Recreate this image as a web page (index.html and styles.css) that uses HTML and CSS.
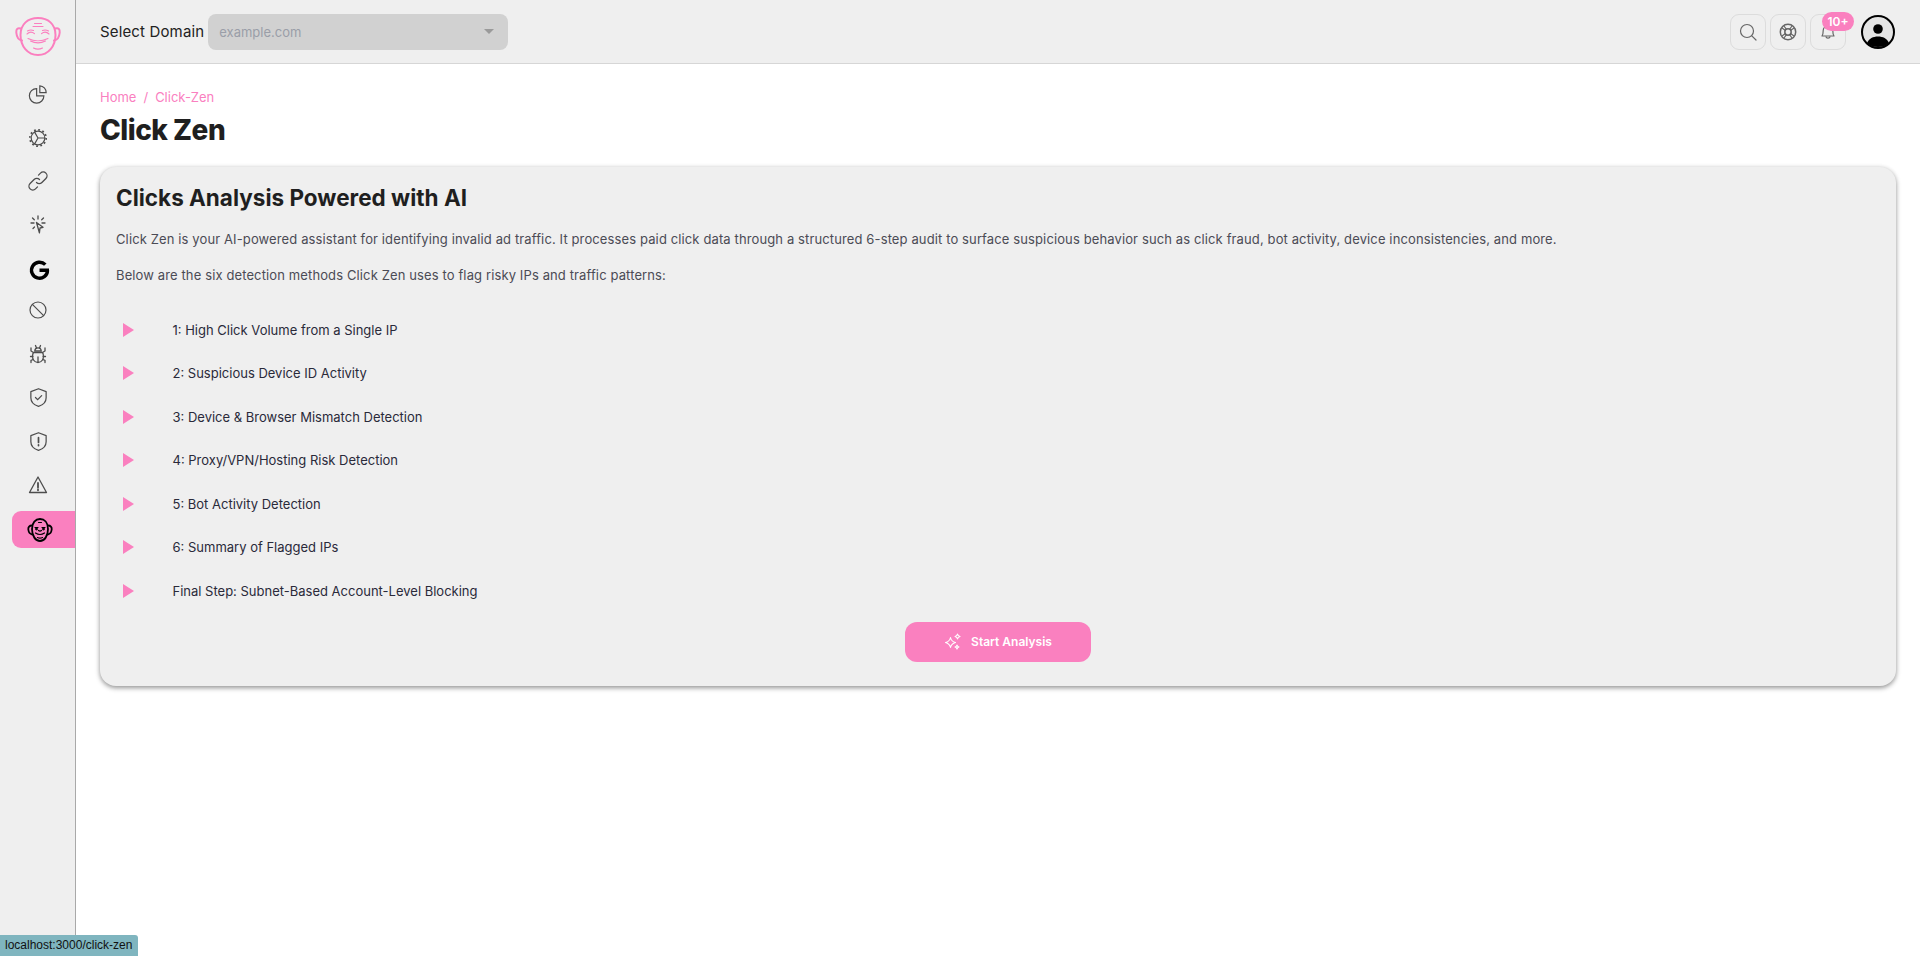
FILE: index.html
```html
<!DOCTYPE html>
<html lang="en">
<head>
  <meta charset="UTF-8" />
  <meta name="viewport" content="width=device-width, initial-scale=1.0"/>
  <title>Click Zen</title>
  <link rel="stylesheet" href="styles.css">
</head>
<body>
  <div class="app">
    <!-- Sidebar -->
    <aside class="sidebar">
      <div class="logo">
        <svg width="46" height="40" viewBox="0 0 46 40" fill="none" stroke="#fb7fbf" stroke-width="1.100" stroke-linecap="round">
          <path stroke-width="2" d="M5.500 19C5.500 8 13 2 23 2s17.500 6 17.500 17c0 11-7 20-17.500 20S5.500 30 5.500 19z"/>
          <path stroke-width="2" d="M5.500 12.500C3 11.500 1 13 1.300 16.500c.3 3.500 2 7.500 5.700 8M40.500 12.500c2.500-1 4.500.5 4.200 4-.3 3.500-2 7.500-5.700 8"/>
          <path d="M12 18c2.500-2.500 5-2.500 7.500-.3M26.500 17.700c2.500-2.200 5-2.200 7.500.3M12.500 15c2-1.200 4-1.300 6-.5M27.500 14.500c2-.8 4-.7 6 .5M13 22.500c6 3 14 3 20 0M15.500 25c5 2.500 10 2.500 15 0M18.500 32c3 1.500 6 1.500 9 0M19.500 7.500h7M18 10.500h10"/>
        </svg>
      </div>
      <nav class="nav">
        <a class="nav-item">
          <svg width="20" height="20" viewBox="0 0 22 22" class="ico"><path d="M9.500 5a8 8 0 1 0 8 8H9.500z"/><path d="M13 2a7.500 7.500 0 0 1 7 7.500h-7z"/></svg>
        </a>
        <a class="nav-item">
          <svg width="20" height="20" viewBox="0 0 22 22" class="ico"><circle cx="11" cy="11" r="7.500"/><circle cx="11" cy="11" r="9" stroke-width="1.800" stroke-dasharray="2 2.710" stroke-linecap="butt"/><path d="M11 11h7.500M11 11l-3.700 6.500M11 11L7.300 4.500"/></svg>
        </a>
        <a class="nav-item">
          <svg width="22" height="22" viewBox="0 0 22 22" class="ico"><path d="M9.500 12.500a3.800 3.800 0 0 0 5.400 0l4-4a3.800 3.800 0 0 0-5.400-5.400l-2 2"/><path d="M12.500 9.500a3.800 3.800 0 0 0-5.400 0l-4 4a3.800 3.800 0 0 0 5.400 5.400l2-2"/></svg>
        </a>
        <a class="nav-item">
          <svg width="22" height="22" viewBox="0 0 22 22" class="ico"><path d="M9.500 8.500l6.500 4.800-3 .7-.6 4.800z" stroke-linejoin="round"/><path d="M11 2v3M4 9h3M18 9h-3M5.500 4l1.800 1.800M16.500 4l-1.800 1.800M6 14.500l1.500-1.500"/></svg>
        </a>
        <a class="nav-item google">
          <svg width="22" height="22" viewBox="0 0 22 22" fill="none" stroke="#000" stroke-width="3.400"><path d="M21 11.200H11.500M19.500 11.200A8 8 0 1 1 17.300 5.700"/></svg>
        </a>
        <a class="nav-item">
          <svg width="20" height="20" viewBox="0 0 22 22" class="ico"><circle cx="11" cy="11" r="8.800"/><path d="M4.800 4.800l12.400 12.400"/></svg>
        </a>
        <a class="nav-item">
          <svg width="22" height="22" viewBox="0 0 22 22" class="ico"><path d="M7.800 8a3.200 3.200 0 0 1 6.400 0z"/><path d="M6.500 9.500h9c1.200 1.500 1.200 6 0 7.500-1 1.500-2.700 2.500-4.500 2.500S7.500 18.500 6.500 17c-1.200-1.500-1.200-6 0-7.500zM11 14v5M8.500 2.500l1 2.500M13.500 2.500l-1 2.500M4 5v3l2.500 1.500M18 5v3l-2.500 1.500M3.500 13.500h2.500M18.500 13.500H16M4 19.500v-2l2-1M18 19.500v-2l-2-1"/></svg>
        </a>
        <a class="nav-item">
          <svg width="21" height="21" viewBox="0 0 22 22" class="ico"><path d="M11 1.800l8 3v6.400c0 4.700-3.200 7.600-8 9-4.800-1.400-8-4.300-8-9V4.800z" stroke-linejoin="round"/><path d="M7.800 11l2.300 2.300L14.300 9"/></svg>
        </a>
        <a class="nav-item">
          <svg width="21" height="21" viewBox="0 0 22 22" class="ico"><path d="M11 1.800l8 3v6.400c0 4.700-3.200 7.600-8 9-4.800-1.400-8-4.300-8-9V4.800z" stroke-linejoin="round"/><path stroke-width="1.800" d="M11 7v5M11 14.500v.8"/></svg>
        </a>
        <a class="nav-item">
          <svg width="22" height="22" viewBox="0 0 22 22" class="ico"><path d="M11 3L2.500 18.500h17z" stroke-linejoin="round"/><path stroke-width="1.800" d="M11 9v4.500M11 15.500v.8"/></svg>
        </a>
        <a class="nav-item active">
          <svg width="26" height="26" viewBox="0 0 26 26" fill="none" stroke="#000" stroke-width="1.200" stroke-linecap="round">
            <path stroke-width="1.800" d="M5 12C5 5.500 8.500 2 13 2s8 3.500 8 10c0 7-3.500 12-8 12s-8-5-8-12z"/>
            <path stroke-width="1.800" d="M4.800 8.500C2.500 8.500 1 10 1.300 12.500c.3 2.500 1.500 4.500 4 5M21.200 8.500c2.300 0 3.800 1.500 3.500 4-.3 2.500-1.500 4.500-4 5"/>
            <path d="M8 10.500h3M15 10.500h3M8.500 16c3 2 6 2 9 0M10.500 20.500c1.700.8 3.300.8 5 0M11.500 5.500h3M11.500 13.500c1 .8 2 .8 3 0"/>
            <circle cx="9.500" cy="12" r=".8"/><circle cx="16.500" cy="12" r=".8"/>
          </svg>
        </a>
      </nav>
    </aside>

    <div class="main">
      <!-- Top bar -->
      <header class="topbar">
        <div class="domain">
          <span class="domain-label">Select Domain</span>
          <div class="domain-select">
            <span>example.com</span>
            <i class="caret"></i>
          </div>
        </div>
        <div class="top-actions">
          <button class="icon-btn">
            <svg width="20" height="20" viewBox="0 0 20 20" fill="none" stroke="#666" stroke-width="1.200" stroke-linecap="round"><circle cx="9" cy="9" r="6.500"/><path d="M13.800 13.800L18 18"/></svg>
          </button>
          <button class="icon-btn">
            <svg width="18" height="18" viewBox="0 0 18 18" fill="none" stroke="#666" stroke-width="1.500"><circle cx="9" cy="9" r="7.700"/><circle cx="9" cy="9" r="3.200"/><path stroke-width="1.200" d="M3 5l3.800 2.800M5 3l2.800 3.800M15 5l-3.800 2.800M13 3l-2.800 3.800M3 13l3.800-2.800M5 15l2.800-3.800M15 13l-3.800-2.800M13 15l-2.800-3.800"/></svg>
          </button>
          <button class="icon-btn bell">
            <svg width="18" height="20" viewBox="0 0 18 20" fill="none" stroke="#666" stroke-width="1.200"><path d="M3 14c1-1.500 1.200-3 1.200-5.500a4.800 4.800 0 0 1 9.600 0c0 2.500.2 4 1.200 5.500z" stroke-linejoin="round"/><path d="M6.800 14.500a2.300 2.300 0 0 0 4.400 0"/></svg>
            <span class="badge">10+</span>
          </button>
          <div class="avatar">
            <svg width="36" height="36" viewBox="0 0 36 36"><circle cx="18" cy="18" r="16" fill="#e4e4e4" stroke="#000" stroke-width="2"/><circle cx="18" cy="15" r="4.800" fill="#000"/><path d="M7 29c2-4.500 6-6.500 11-6.500S27 24.500 29 29c-3 3-7 4-11 4S10 32 7 29z" fill="#000"/></svg>
          </div>
        </div>
      </header>

      <main class="content">
        <div class="crumbs"><a>Home</a><span>/</span><a>Click-Zen</a></div>
        <h1>Click Zen</h1>

        <section class="card">
          <h2>Clicks Analysis Powered with AI</h2>
          <p>Click Zen is your AI-powered assistant for identifying invalid ad traffic. It processes paid click data through a structured 6-step audit to surface suspicious behavior such as click fraud, bot activity, device inconsistencies, and more.</p>
          <p>Below are the six detection methods Click Zen uses to flag risky IPs and traffic patterns:</p>

          <ul class="steps">
            <li><i class="arrow"></i>1: High Click Volume from a Single IP</li>
            <li><i class="arrow"></i>2: Suspicious Device ID Activity</li>
            <li><i class="arrow"></i>3: Device &amp; Browser Mismatch Detection</li>
            <li><i class="arrow"></i>4: Proxy/VPN/Hosting Risk Detection</li>
            <li><i class="arrow"></i>5: Bot Activity Detection</li>
            <li><i class="arrow"></i>6: Summary of Flagged IPs</li>
            <li><i class="arrow"></i>Final Step: Subnet-Based Account-Level Blocking</li>
          </ul>

          <div class="card-foot">
            <button class="start-btn">
              <svg width="18" height="18" viewBox="0 0 18 18" fill="none" stroke="#fff" stroke-width="1.100" stroke-linejoin="round"><path d="M6.500 4.500c.6 3 1.800 4.200 5 5-3.200.8-4.400 2-5 5-.6-3-1.800-4.200-5-5 3.200-.8 4.400-2 5-5z"/><path d="M13.500 1c.3 1.500.9 2.100 2.500 2.500-1.600.4-2.200 1-2.500 2.500-.3-1.500-.9-2.100-2.500-2.500 1.600-.4 2.200-1 2.500-2.500zM13 12c.3 1.300.8 1.800 2 2-1.200.3-1.700.8-2 2-.3-1.200-.8-1.700-2-2 1.200-.2 1.700-.7 2-2z"/></svg>
              Start Analysis
            </button>
          </div>
        </section>
      </main>
    </div>
  </div>

  <div class="status">localhost:3000/click-zen</div>
</body>
</html>
```

FILE: styles.css
```css
body {
  margin: 0;
  font-family: Inter, "Open Sans", sans-serif;
  background: #fff;
  color: #1f1f1f;
}

.app {
  display: flex;
  height: 956px;
  overflow: hidden;
}

/* Sidebar */
.sidebar {
  width: 75px;
  flex-shrink: 0;
  background: #efefef;
  border-right: 1px solid #a9a9a9;
}

.logo {
  height: 63px;
  padding-top: 16px;
  box-sizing: border-box;
  display: flex;
  justify-content: center;
}

.nav {
  display: flex;
  flex-direction: column;
  gap: 6.700px;
  padding: 12.500px 0 0 12px;
}

.nav-item {
  height: 37px;
  display: flex;
  align-items: center;
  justify-content: center;
  padding-right: 11px;
}

.nav-item.google {
  margin: 1px 0 -3px;
  padding-left: 2px;
}

.nav-item.active {
  background: #fa80bf;
  border-radius: 9px 0 0 9px;
  padding-right: 7px;
  margin-top: 1px;
}

.ico {
  fill: none;
  stroke: #4d4d4d;
  stroke-width: 1.300;
  stroke-linecap: round;
}

/* Top bar */
.main {
  flex: 1;
  min-width: 0;
}

.topbar {
  height: 63px;
  background: #efefef;
  border-bottom: 1px solid #d6d6d6;
  display: flex;
  align-items: center;
  justify-content: space-between;
  padding: 0 24px;
}

.domain {
  display: flex;
  align-items: center;
  gap: 4px;
}

.domain-label {
  font-size: 15px;
  letter-spacing: 0.15px;
  color: #222;
}

.domain-select {
  width: 300px;
  height: 36px;
  box-sizing: border-box;
  background: #d1d1d1;
  border-radius: 8px;
  display: flex;
  align-items: center;
  justify-content: space-between;
  padding: 0 14px 0 11px;
  font-size: 13px;
  color: #9a9ea8;
}

.caret {
  width: 0;
  height: 0;
  border-left: 5px solid transparent;
  border-right: 5px solid transparent;
  border-top: 5px solid #9a9a9a;
}

.top-actions {
  display: flex;
  align-items: center;
  gap: 4px;
}

.icon-btn {
  width: 36px;
  height: 36px;
  padding: 0;
  background: transparent;
  border: 1px solid #dcdcdc;
  border-radius: 9px;
  display: flex;
  align-items: center;
  justify-content: center;
  position: relative;
}

.badge {
  position: absolute;
  top: -3px;
  left: 11px;
  width: 32px;
  height: 19px;
  border-radius: 10px;
  background: #fa80bf;
  color: #fff;
  font-family: Inter, sans-serif;
  font-size: 12px;
  font-weight: 600;
  line-height: 19px;
  text-align: center;
}

.avatar {
  margin-left: 10px;
  width: 36px;
  height: 36px;
}

/* Content */
.content {
  padding: 25px 24px 0;
}

.crumbs {
  display: flex;
  gap: 7px;
  font-size: 13px;
  line-height: 16px;
  color: #fa80bf;
}

h1 {
  margin: 8px 0 20px;
  font-size: 28px;
  line-height: 34px;
  font-weight: 800;
  letter-spacing: -0.5px;
  color: #1f1f1f;
}

.card {
  background: #efefef;
  border-radius: 16px;
  box-shadow: 0 2px 5px rgba(0,0,0,0.4), 0 0 5px rgba(0,0,0,0.06);
  padding: 17px 16px 24px;
  height: 519px;
  box-sizing: border-box;
}

.card h2 {
  margin: 0 0 18px;
  font-size: 22.500px;
  line-height: 28px;
  font-weight: 700;
  color: #1f1f1f;
}

.card p {
  margin: 0 0 18px;
  font-size: 13px;
  line-height: 18px;
  letter-spacing: 0.12px;
  color: #4b4b55;
}

.steps {
  list-style: none;
  margin: 0;
  padding: 6px 0 0;
}

.steps li {
  height: 43.500px;
  display: flex;
  align-items: center;
  font-size: 13px;
  color: #2a2a3a;
}

.arrow {
  width: 0;
  height: 0;
  margin: 0 38.500px 0 7px;
  border-left: 11px solid #fa80bf;
  border-top: 7px solid transparent;
  border-bottom: 7px solid transparent;
}

.card-foot {
  display: flex;
  justify-content: center;
  margin-top: 9px;
}

.start-btn {
  width: 186px;
  height: 40px;
  border: none;
  border-radius: 12px;
  background: #fa80bf;
  color: #fff;
  font-family: inherit;
  font-size: 12px;
  font-weight: 600;
  display: flex;
  align-items: center;
  justify-content: center;
  gap: 9px;
}

/* Browser link preview */
.status {
  position: absolute;
  left: 0;
  bottom: 0;
  width: 138px;
  height: 21px;
  box-sizing: border-box;
  background: #7fb5bf;
  border-radius: 0 3px 0 0;
  padding-left: 5px;
  font-family: "Liberation Sans", sans-serif;
  font-size: 12px;
  line-height: 21px;
  color: #111;
}
```
